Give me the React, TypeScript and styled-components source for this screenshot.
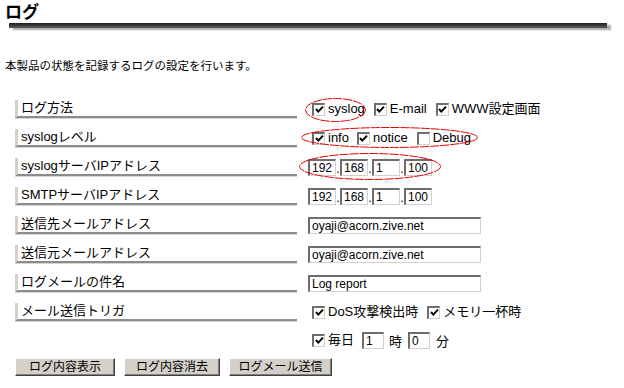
import styled, { createGlobalStyle } from 'styled-components'
import type { ReactNode } from 'react'

const GlobalStyle = createGlobalStyle`
  html, body {
    margin: 0;
    padding: 0;
    background: #ffffff;
  }
  body {
    font-family: "Liberation Sans", "Noto Sans CJK JP", sans-serif;
    color: #000;
  }
`

const Page = styled.div`
  width: 624px;
  height: 388px;
  overflow: hidden;
  padding-top: 3px;
  box-sizing: border-box;
`

const Title = styled.h1`
  margin: 0 0 0 5px;
  font-size: 17px;
  line-height: 19px;
  font-weight: bold;
`

const HeadBar = styled.div`
  margin: 1px 0 0 9px;
  width: 598px;
  height: 5px;
  background: linear-gradient(#1e1e1e, #5c5c5c);
  box-shadow: 4px 2px 2px rgba(0, 0, 0, 0.35);
`

const Intro = styled.p`
  margin: 31px 0 0 5px;
  font-size: 11.5px;
  line-height: 14px;
`

const Form = styled.div`
  margin: 27px 0 0 15px;
  display: grid;
  grid-template-columns: 282px 1fr;
  column-gap: 11px;
  row-gap: 11px;
  align-items: start;
`

const Label = styled.div`
  height: 16px;
  border-left: 3px solid #d4d0c8;
  border-bottom: 2px solid #8c8c8c;
  box-shadow: 0 1px 0 #d8d5ce;
  padding-left: 3px;
  font-size: 13px;
  line-height: 16px;
  white-space: nowrap;
`

const Value = styled.div`
  display: flex;
  flex-direction: column;
  gap: 10px;
`

const Line = styled.div<{ $indent?: number }>`
  height: 18px;
  display: flex;
  align-items: center;
  padding-left: ${(p) => p.$indent ?? 0}px;
  font-size: 13px;
  white-space: nowrap;
`

const Group = styled.span`
  position: relative;
  display: inline-flex;
  align-items: center;
  height: 18px;
`

const Ring = styled.svg`
  position: absolute;
  pointer-events: none;
  overflow: visible;
`

const Box = styled.span<{ $gap?: number }>`
  width: 13px;
  height: 13px;
  box-sizing: border-box;
  border-style: solid;
  border-width: 2px 1px 1px 2px;
  border-color: #6e6e6e #d4d0c8 #d4d0c8 #6e6e6e;
  background: #fff;
  display: inline-flex;
  align-items: center;
  justify-content: center;
  margin-left: ${(p) => p.$gap ?? 0}px;
  flex-shrink: 0;
`

const Caption = styled.span`
  margin-left: 3px;
  line-height: 18px;
`

const Field = styled.input<{ $w: number; $gap?: number }>`
  width: ${(p) => p.$w}px;
  height: 17px;
  box-sizing: border-box;
  margin: 0 0 0 ${(p) => p.$gap ?? 0}px;
  padding: 0 2px;
  border-style: solid;
  border-width: 2px 1px 1px 2px;
  border-color: #6e6e6e #d4d0c8 #d4d0c8 #6e6e6e;
  background: #fff;
  font-family: "Liberation Sans", "Noto Sans CJK JP", sans-serif;
  font-size: 12px;
  line-height: 13px;
  color: #000;
  outline: none;
`

const Dot = styled.span`
  width: 4px;
  text-align: center;
  font-size: 12px;
  align-self: flex-end;
  line-height: 14px;
`

const Unit = styled.span<{ $l: number }>`
  margin-left: ${(p) => p.$l}px;
`

const Buttons = styled.div`
  display: flex;
  gap: 9px;
  margin: 9px 0 0 15px;
`

const Btn = styled.button<{ $w: number }>`
  width: ${(p) => p.$w}px;
  height: 18px;
  padding: 0;
  background: #d4d0c8;
  border: 1px solid;
  border-color: #ffffff #404040 #404040 #ffffff;
  box-shadow: inset -1px -1px 0 #808080;
  font-family: "Liberation Sans", "Noto Sans CJK JP", sans-serif;
  font-size: 12px;
  line-height: 15px;
  color: #000;
`

const Check = ({ on = true, gap }: { on?: boolean; gap?: number }) => (
  <Box $gap={gap}>
    {on && (
      <svg width="9" height="9" viewBox="0 0 9 9">
        <polyline points="1,4 3.3,6.6 8,1.6" fill="none" stroke="#000" strokeWidth="2" />
      </svg>
    )}
  </Box>
)

interface CircledProps {
  left: number
  top: number
  w: number
  h: number
  children: ReactNode
}

// hand-drawn red marker ellipse laid over a group of controls
const Circled = ({ left, top, w, h, children }: CircledProps) => (
  <Group>
    {children}
    <Ring width={w} height={h} style={{ left, top }}>
      <ellipse
        cx={w / 2}
        cy={h / 2}
        rx={w / 2 - 0.5}
        ry={h / 2 - 0.5}
        fill="none"
        stroke="#e60000"
        strokeWidth="1"
        strokeDasharray="9 1"
      />
    </Ring>
  </Group>
)

const Ip = ({ parts }: { parts: string[] }) => (
  <>
    {parts.map((p, i) => (
      <span key={i} style={{ display: 'contents' }}>
        {i > 0 && <Dot>.</Dot>}
        <Field $w={28} defaultValue={p} />
      </span>
    ))}
  </>
)

export default function App() {
  const ip = ['192', '168', '1', '100']

  return (
    <Page>
      <GlobalStyle />
      <Title>ログ</Title>
      <HeadBar />
      <Intro>本製品の状態を記録するログの設定を行います。</Intro>

      <Form>
        <Label>ログ方法</Label>
        <Value>
          <Line $indent={4}>
            <Circled left={-7} top={-2} w={61} h={24}>
              <Check />
              <Caption>syslog</Caption>
            </Circled>
            <Check gap={9} />
            <Caption>E-mail</Caption>
            <Check gap={9} />
            <Caption>WWW設定画面</Caption>
          </Line>
        </Value>

        <Label>syslogレベル</Label>
        <Value>
          <Line $indent={4}>
            <Circled left={-11} top={-2} w={177} h={21}>
              <Check />
              <Caption>info</Caption>
              <Check gap={8} />
              <Caption>notice</Caption>
              <Check on={false} gap={9} />
              <Caption>Debug</Caption>
            </Circled>
          </Line>
        </Value>

        <Label>syslogサーバIPアドレス</Label>
        <Value>
          <Line>
            <Circled left={-9} top={-5} w={142} h={27}>
              <Ip parts={ip} />
            </Circled>
          </Line>
        </Value>

        <Label>SMTPサーバIPアドレス</Label>
        <Value>
          <Line>
            <Ip parts={ip} />
          </Line>
        </Value>

        <Label>送信先メールアドレス</Label>
        <Value>
          <Line>
            <Field $w={173} defaultValue="oyaji@acorn.zive.net" />
          </Line>
        </Value>

        <Label>送信元メールアドレス</Label>
        <Value>
          <Line>
            <Field $w={173} defaultValue="oyaji@acorn.zive.net" />
          </Line>
        </Value>

        <Label>ログメールの件名</Label>
        <Value>
          <Line>
            <Field $w={173} defaultValue="Log report" />
          </Line>
        </Value>

        <Label>メール送信トリガ</Label>
        <Value>
          <Line $indent={4}>
            <Check />
            <Caption>DoS攻撃検出時</Caption>
            <Check gap={9} />
            <Caption>メモリ一杯時</Caption>
          </Line>
          <Line $indent={4}>
            <Check />
            <Caption>毎日</Caption>
            <Field $w={22} $gap={8} defaultValue="1" />
            <Unit $l={5}>時</Unit>
            <Field $w={22} $gap={6} defaultValue="0" />
            <Unit $l={6}>分</Unit>
          </Line>
        </Value>
      </Form>

      <Buttons>
        <Btn $w={100}>ログ内容表示</Btn>
        <Btn $w={96}>ログ内容消去</Btn>
        <Btn $w={103}>ログメール送信</Btn>
      </Buttons>
    </Page>
  )
}
